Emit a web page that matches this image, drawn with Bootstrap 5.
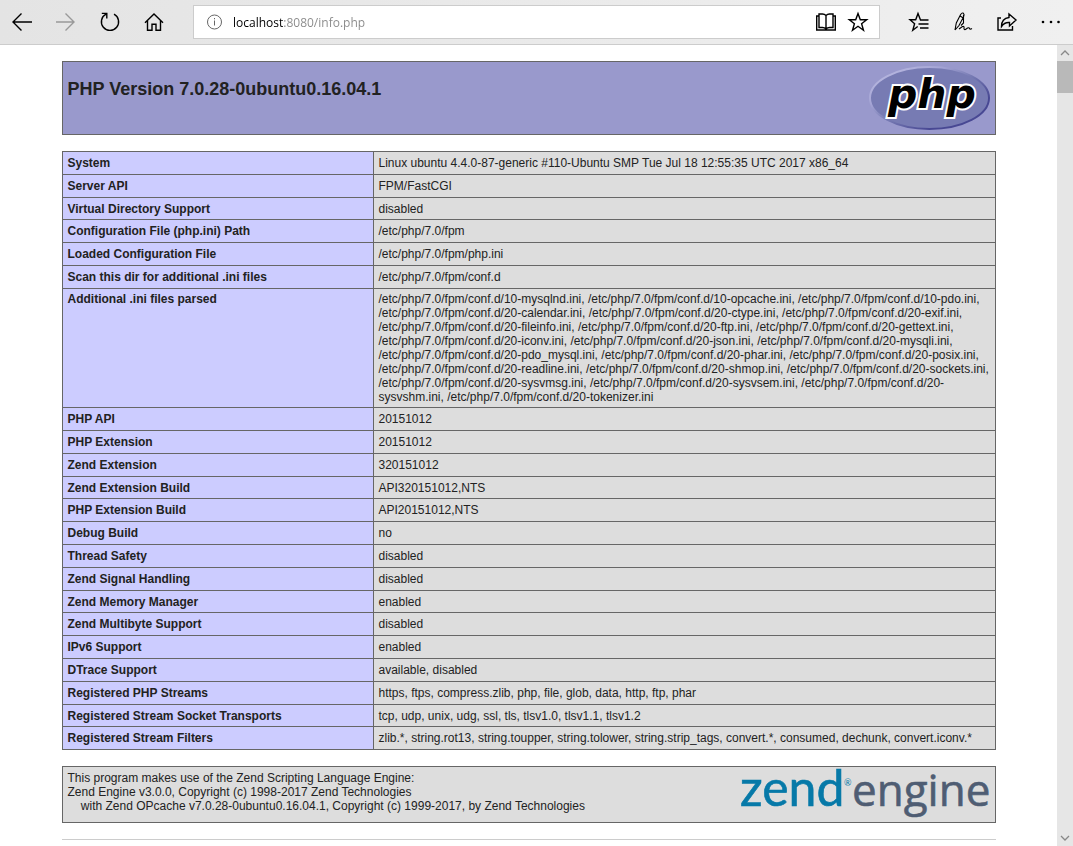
<!DOCTYPE html>
<html lang="en">
<head>
<meta charset="utf-8">
<meta name="viewport" content="width=device-width, initial-scale=1">
<title>phpinfo()</title>
<link href="https://cdn.jsdelivr.net/npm/bootstrap@5.3.0/dist/css/bootstrap.min.css" rel="stylesheet">
<style>
body { font-family: "Liberation Sans", Arial, sans-serif; font-size: 12px; line-height: 14px; color: #222; background: #fff; }
.browser-bar { background: linear-gradient(90deg, #e4e4e4, #f0f0f0); border-bottom: 1px solid #ccc; height: 45px; padding-left: 11px; padding-right: 11px; }
.tool-group { gap: 22px; }
.tool { border: 0; padding: 0; background: none; color: #000; line-height: 0; width: 22px; height: 22px; }
.tool svg, .address svg { width: 22px; height: 22px; fill: none; stroke: currentColor; stroke-width: 1.4; display: block; }
.tool .dots { fill: currentColor; stroke: none; }
.tool .fine { stroke-width: 1.1; }
.tool:disabled { color: #999; }
.address { height: 34px; border: 1px solid #ccc; background: #fff; margin-left: 28px; margin-right: 28px; padding: 0 10px; }
.address .site-info { color: #666; stroke-width: 1; margin-right: 7px; }
.address .tool + .tool { margin-left: 10px; }
.url-box { border: 0; outline: 0; padding: 2px 0 0; min-width: 0; font: 12px/20px "Open Sans", sans-serif; color: transparent; background: linear-gradient(90deg, #000 51px, #888 51px); -webkit-background-clip: text; background-clip: text; }
.scroll-rail { width: 16px; background: #e6e6e6; }
.scroll-rail svg { width: 16px; height: 16px; fill: none; stroke: #888; stroke-width: 1.3; }
.scroll-thumb { height: 32px; background: #b9b9b9; }
.sheet { width: 100%; max-width: 934px; }
.panel { border: 1px solid #666; }
.panel-version { background: #9999cc; }
.panel-version h1 { font-size: 18px; line-height: 20px; font-weight: 700; padding: 17px 5px 0; }
.php-logo { width: 121px; height: 66px; margin: 4px 5px 2px 0; }
.info-table { width: 100%; border-collapse: collapse; }
.info-table th, .info-table td { border: 1px solid #666; padding: 4px 5px; vertical-align: top; }
.info-table th { width: 311px; background: #ccccff; font-weight: 700; }
.info-table td { background: #ddd; }
.info-table tr:nth-child(3) > *, .info-table tr:nth-child(7) > *, .info-table tr:nth-child(5n+11) > * { padding-bottom: 3px; }
.info-table tr:nth-child(7) > * { padding-top: 3px; }
.panel-zend { background: #ddd; }
.panel-zend p { padding: 4px 5px; }
.zend-logo { width: 258px; height: 55px; overflow: visible; }
.end-rule { border-top: 1px solid #ccc; }
</style>
</head>
<body>
<div class="vh-100 d-flex flex-column overflow-hidden">
<header class="browser-bar d-flex align-items-center flex-shrink-0">
  <nav class="tool-group d-flex" aria-label="Navigation">
    <button class="tool" aria-label="Back"><svg viewBox="0 0 22 22"><path d="M21 11H2M10.500 2.500 2 11l8.500 8.500"/></svg></button>
    <button class="tool" aria-label="Forward" disabled><svg viewBox="0 0 22 22"><path d="M1 11h18M10.500 2.500 19 11l-8.500 8.500"/></svg></button>
    <button class="tool" aria-label="Refresh"><svg viewBox="0 0 22 22"><path d="M7 3.200A8.600 8.600 0 1 0 15 3.200M2.800 2.400h5v5"/></svg></button>
    <button class="tool" aria-label="Home"><svg viewBox="0 0 22 22"><path d="M2 11.800 11 3l9 8.800M4.500 9.500V19.300H9v-6h4v6h4.500V9.500"/></svg></button>
  </nav>
  <div class="address d-flex align-items-center flex-grow-1">
    <svg class="site-info flex-shrink-0" viewBox="0 0 22 22"><circle cx="10.500" cy="11" r="7"/><path d="M10.500 9.500v5M10.500 7v1.300"/></svg>
    <input class="url-box flex-grow-1" type="text" aria-label="Address" value="localhost:8080/info.php">
    <button class="tool" aria-label="Reading view"><svg viewBox="0 0 22 22"><path d="M11 4.500v14M11 4.500Q9.500 3 7.500 3H4v13.500h3.500q2 0 3.500 1.500 1.500-1.500 3.500-1.500H18V3h-3.500q-2 0-3.500 1.500M4 5H1.700v14h18.600V5H18"/></svg></button>
    <button class="tool" aria-label="Add to favorites"><svg viewBox="0 0 22 22"><path d="m11 2.500 2.300 6.200h6.400l-5.100 4 1.900 6.600L11 15.300l-5.500 4 1.900-6.600-5.100-4h6.400z"/></svg></button>
  </div>
  <nav class="tool-group d-flex" aria-label="Tools">
    <button class="tool" aria-label="Favorites"><svg viewBox="0 0 22 22"><path d="M20.500 9h-8L10 2.500 7.700 8.700H2l4.600 4-1.800 6.500 4.900-3.700M10.500 13h10M12 17h8.500"/></svg></button>
    <button class="tool" aria-label="Add notes"><svg class="fine" viewBox="0 0 22 22"><path d="M3 19 4.300 12 8.500 3.800q1.500-2.600 3-1.500 1.200 1.200 0 3.700L7 14.500 3 19M8 5l3 1.800M11.500 4v8L9 14.500M7 18l3.500-2.500q2-.5 1.500 1.500-.2 2 1.500 1.500l2-1.500q1.500-.8 2 .5t2.500 0"/></svg></button>
    <button class="tool" aria-label="Share"><svg viewBox="0 0 22 22"><path d="M5 7H2v12h14.500v-4M13 3l7 6-6.500 6v-3.500Q8.500 11 5.500 15.500 5.500 7.500 13 6.500z"/></svg></button>
    <button class="tool" aria-label="More"><svg class="dots" viewBox="0 0 22 22"><circle cx="3" cy="11" r="1.300"/><circle cx="11" cy="11" r="1.300"/><circle cx="18.500" cy="11" r="1.300"/></svg></button>
  </nav>
</header>
<div class="d-flex flex-grow-1 overflow-hidden">
  <main class="flex-grow-1 overflow-hidden d-flex justify-content-center">
    <div class="sheet d-flex flex-column gap-3 pt-3">
      <section class="panel panel-version d-flex justify-content-between">
        <h1 class="m-0">PHP Version 7.0.28-0ubuntu0.16.04.1</h1>
        <svg class="php-logo flex-shrink-0" viewBox="0 0 121 66" role="img" aria-label="PHP">
          <defs><linearGradient id="rim" x1="0" y1="0" x2="1" y2="1"><stop offset="0" stop-color="#c0c0e4"/><stop offset=".3" stop-color="#a5a5d5"/><stop offset=".5" stop-color="#777bb3"/><stop offset=".75" stop-color="#484893"/></linearGradient></defs>
          <ellipse cx="60.500" cy="32" rx="59.500" ry="31" fill="#777bb3" stroke="url(#rim)" stroke-width="2"/>
          <text x="19" y="42" font-family="DejaVu Sans, sans-serif" font-size="41" font-weight="700" font-style="italic" stroke="#fff" stroke-width="4" paint-order="stroke">php</text>
        </svg>
      </section>
      <table class="info-table">
        <tbody>
        <tr><th scope="row">System</th><td>Linux ubuntu 4.4.0-87-generic #110-Ubuntu SMP Tue Jul 18 12:55:35 UTC 2017 x86_64</td></tr>
        <tr><th scope="row">Server API</th><td>FPM/FastCGI</td></tr>
        <tr><th scope="row">Virtual Directory Support</th><td>disabled</td></tr>
        <tr><th scope="row">Configuration File (php.ini) Path</th><td>/etc/php/7.0/fpm</td></tr>
        <tr><th scope="row">Loaded Configuration File</th><td>/etc/php/7.0/fpm/php.ini</td></tr>
        <tr><th scope="row">Scan this dir for additional .ini files</th><td>/etc/php/7.0/fpm/conf.d</td></tr>
        <tr><th scope="row">Additional .ini files parsed</th><td>/etc/php/7.0/fpm/conf.d/10-mysqlnd.ini, /etc/php/7.0/fpm/conf.d/10-opcache.ini, /etc/php/7.0/fpm/conf.d/10-pdo.ini, /etc/php/7.0/fpm/conf.d/20-calendar.ini, /etc/php/7.0/fpm/conf.d/20-ctype.ini, /etc/php/7.0/fpm/conf.d/20-exif.ini, /etc/php/7.0/fpm/conf.d/20-fileinfo.ini, /etc/php/7.0/fpm/conf.d/20-ftp.ini, /etc/php/7.0/fpm/conf.d/20-gettext.ini, /etc/php/7.0/fpm/conf.d/20-iconv.ini, /etc/php/7.0/fpm/conf.d/20-json.ini, /etc/php/7.0/fpm/conf.d/20-mysqli.ini, /etc/php/7.0/fpm/conf.d/20-pdo_mysql.ini, /etc/php/7.0/fpm/conf.d/20-phar.ini, /etc/php/7.0/fpm/conf.d/20-posix.ini, /etc/php/7.0/fpm/conf.d/20-readline.ini, /etc/php/7.0/fpm/conf.d/20-shmop.ini, /etc/php/7.0/fpm/conf.d/20-sockets.ini, /etc/php/7.0/fpm/conf.d/20-sysvmsg.ini, /etc/php/7.0/fpm/conf.d/20-sysvsem.ini, /etc/php/7.0/fpm/conf.d/20-sysvshm.ini, /etc/php/7.0/fpm/conf.d/20-tokenizer.ini</td></tr>
        <tr><th scope="row">PHP API</th><td>20151012</td></tr>
        <tr><th scope="row">PHP Extension</th><td>20151012</td></tr>
        <tr><th scope="row">Zend Extension</th><td>320151012</td></tr>
        <tr><th scope="row">Zend Extension Build</th><td>API320151012,NTS</td></tr>
        <tr><th scope="row">PHP Extension Build</th><td>API20151012,NTS</td></tr>
        <tr><th scope="row">Debug Build</th><td>no</td></tr>
        <tr><th scope="row">Thread Safety</th><td>disabled</td></tr>
        <tr><th scope="row">Zend Signal Handling</th><td>disabled</td></tr>
        <tr><th scope="row">Zend Memory Manager</th><td>enabled</td></tr>
        <tr><th scope="row">Zend Multibyte Support</th><td>disabled</td></tr>
        <tr><th scope="row">IPv6 Support</th><td>enabled</td></tr>
        <tr><th scope="row">DTrace Support</th><td>available, disabled</td></tr>
        <tr><th scope="row">Registered PHP Streams</th><td>https, ftps, compress.zlib, php, file, glob, data, http, ftp, phar</td></tr>
        <tr><th scope="row">Registered Stream Socket Transports</th><td>tcp, udp, unix, udg, ssl, tls, tlsv1.0, tlsv1.1, tlsv1.2</td></tr>
        <tr><th scope="row">Registered Stream Filters</th><td>zlib.*, string.rot13, string.toupper, string.tolower, string.strip_tags, convert.*, consumed, dechunk, convert.iconv.*</td></tr>
        </tbody>
      </table>
      <section class="panel panel-zend d-flex justify-content-between">
        <p class="m-0">This program makes use of the Zend Scripting Language Engine:<br>Zend Engine v3.0.0, Copyright (c) 1998-2017 Zend Technologies<br>&nbsp;&nbsp;&nbsp;&nbsp;with Zend OPcache v7.0.28-0ubuntu0.16.04.1, Copyright (c) 1999-2017, by Zend Technologies</p>
        <svg class="zend-logo flex-shrink-0" viewBox="0 0 258 55" role="img" aria-label="Zend Engine">
          <text x="3" y="39" font-family="Lato, sans-serif" font-size="50" fill="#0679a8" stroke="#0679a8" stroke-width=".6">zend</text>
          <text x="107" y="19" font-family="Lato, sans-serif" font-size="9" fill="#0679a8">®</text>
          <text x="115" y="39" font-family="Open Sans, sans-serif" font-size="44" fill="#4f5d73" stroke="#4f5d73" stroke-width=".6">engine</text>
        </svg>
      </section>
      <div class="end-rule"></div>
    </div>
  </main>
  <div class="scroll-rail d-flex flex-column flex-shrink-0" aria-hidden="true">
    <svg viewBox="0 0 16 16"><path d="m4 10 4-4 4 4"/></svg>
    <div class="scroll-thumb"></div>
    <svg class="mt-auto" viewBox="0 0 16 16"><path d="m4 6 4 4 4-4"/></svg>
  </div>
</div>
</div>
<script src="https://cdn.jsdelivr.net/npm/bootstrap@5.3.0/dist/js/bootstrap.bundle.min.js"></script>
</body>
</html>
